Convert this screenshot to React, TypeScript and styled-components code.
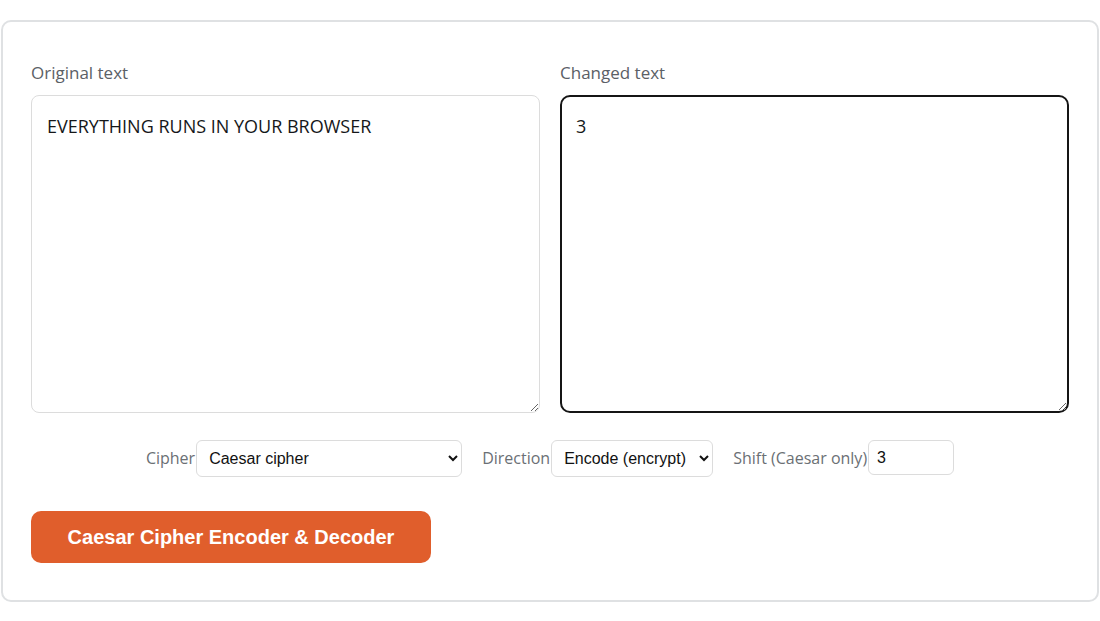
import styled, { createGlobalStyle } from "styled-components";

const GlobalStyle = createGlobalStyle`
  html, body {
    margin: 0;
    background: #ffffff;
  }
  * {
    box-sizing: border-box;
  }
`;

const Page = styled.main`
  padding: 20px 1px 0 1px;
  font-family: "Open Sans", "Noto Sans", sans-serif;
`;

const Card = styled.section`
  width: 1098px;
  border: 2px solid #dfe1e3;
  border-radius: 10px;
  padding: 40px 28px 37px;
  background: #ffffff;
`;

const Columns = styled.div`
  display: grid;
  grid-template-columns: 1fr 1fr;
  gap: 20px;
`;

const Field = styled.div`
  display: flex;
  flex-direction: column;
`;

const FieldLabel = styled.label`
  font-size: 17px;
  font-weight: 500;
  line-height: 22px;
  color: #5b6066;
  margin-bottom: 11px;
`;

const TextBox = styled.textarea<{ $active?: boolean }>`
  height: 318px;
  width: 100%;
  font-family: "Open Sans", "Noto Sans", sans-serif;
  font-size: 18px;
  font-weight: 500;
  line-height: 22px;
  color: #151719;
  border-radius: ${({ $active }) => ($active ? "10px" : "8px")};
  border: ${({ $active }) =>
    $active ? "2px solid #151515" : "1px solid #dcdcdc"};
  padding: ${({ $active }) => ($active ? "18px 14px" : "19px 15px")};
  outline: none;
  resize: vertical;
`;

const Controls = styled.div`
  display: flex;
  justify-content: center;
  align-items: center;
  gap: 20px;
  margin-top: 27px;
`;

const ControlGroup = styled.div`
  display: flex;
  align-items: center;
`;

const ControlLabel = styled.label`
  font-size: 16px;
  color: #6b7075;
  margin-right: 1px;
  margin-top: -2px;
`;

const Select = styled.select<{ $width: number }>`
  width: ${({ $width }) => $width}px;
  height: 37px;
  font-family: "Liberation Sans", Arial, sans-serif;
  font-size: 16px;
  color: #111111;
  background: #ffffff;
  border: 1px solid #dcdcdc;
  border-radius: 6px;
  padding: 0 8px;
`;

const NumberInput = styled.input`
  width: 86px;
  height: 35px;
  font-family: "Liberation Sans", Arial, sans-serif;
  font-size: 16px;
  color: #111111;
  border: 1px solid #dcdcdc;
  border-radius: 6px;
  padding: 0 8px;
  margin-top: -2px;
  outline: none;
`;

const ActionButton = styled.button`
  margin-top: 34px;
  width: 400px;
  height: 52px;
  border: none;
  border-radius: 10px;
  background: #e05e2c;
  color: #ffffff;
  font-family: "Liberation Sans", Arial, sans-serif;
  font-weight: 700;
  font-size: 20px;
  cursor: pointer;
`;

export default function App() {
  return (
    <>
      <GlobalStyle />
      <Page>
        <Card>
          <Columns>
            <Field>
              <FieldLabel>Original text</FieldLabel>
              <TextBox defaultValue="EVERYTHING RUNS IN YOUR BROWSER" />
            </Field>
            <Field>
              <FieldLabel>Changed text</FieldLabel>
              <TextBox $active readOnly defaultValue="3" />
            </Field>
          </Columns>

          <Controls>
            <ControlGroup>
              <ControlLabel>Cipher</ControlLabel>
              <Select $width={266} defaultValue="caesar">
                <option value="caesar">Caesar cipher</option>
                <option value="rot13">ROT13</option>
                <option value="atbash">Atbash</option>
              </Select>
            </ControlGroup>
            <ControlGroup>
              <ControlLabel>Direction</ControlLabel>
              <Select $width={162} defaultValue="encode">
                <option value="encode">Encode (encrypt)</option>
                <option value="decode">Decode (decrypt)</option>
              </Select>
            </ControlGroup>
            <ControlGroup>
              <ControlLabel>Shift (Caesar only)</ControlLabel>
              <NumberInput type="text" defaultValue="3" />
            </ControlGroup>
          </Controls>

          <ActionButton>Caesar Cipher Encoder &amp; Decoder</ActionButton>
        </Card>
      </Page>
    </>
  );
}
